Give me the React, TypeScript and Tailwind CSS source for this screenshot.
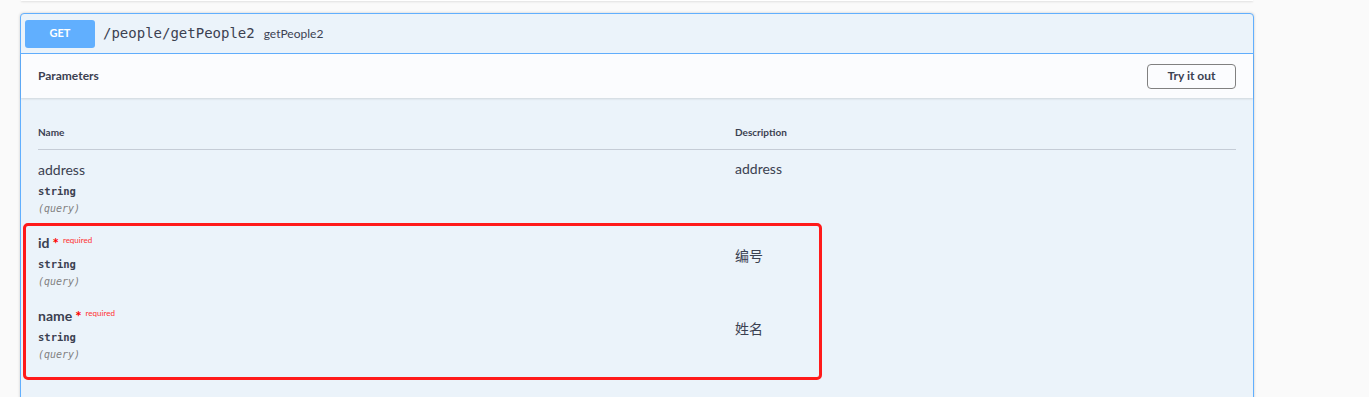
import React from "react";

const sans = { fontFamily: "Lato, 'Noto Sans CJK SC', sans-serif" };

function Param({
  name,
  required,
  desc,
  cjk,
}: {
  name: string;
  required?: boolean;
  desc: string;
  cjk?: boolean;
}) {
  return (
    <div className="grid grid-cols-[697px_1fr]">
      <div className="flex flex-col">
        <div className="flex items-start h-[20px]">
          <span
            className={
              required
                ? "text-[14px] font-bold text-[#3b4151] leading-[20px]"
                : "text-[14px] text-[#3b4151] leading-[20px]"
            }
          >
            {name}
          </span>
          {required && (
            <>
              <span className="ml-[3px] mt-[2px] text-[15px] text-[#ff0000] leading-[16px] font-bold">*</span>
              <span className="ml-[4px] mt-[1px] text-[8px] text-[#ff3030] leading-[12px]">required</span>
            </>
          )}
        </div>
        <div
          className="mt-[4px] text-[10.5px] font-semibold text-[#3b4151] leading-[14px]"
          style={{ fontFamily: "'DejaVu Sans Mono', monospace" }}
        >
          string
        </div>
        <div
          className="mt-[4px] text-[10px] italic text-[#808080] leading-[14px]"
          style={{ fontFamily: "'DejaVu Sans Mono', monospace" }}
        >
          (query)
        </div>
      </div>
      <div className={cjk ? "pt-[13px] text-[14px] text-[#3b4151] leading-[20px]" : "text-[14px] text-[#3b4151] leading-[18px]"}>
        {desc}
      </div>
    </div>
  );
}

export default function App() {
  return (
    <div className="w-[1369px] h-[397px] bg-[#fafafa] overflow-hidden relative" style={sans}>
      <div className="mx-[21px] w-[1232px] h-[1px] bg-white shadow-[0_1px_2px_rgba(0,0,0,0.15)]" />
      <div className="mt-[12px] ml-[20px] w-[1234px] h-[400px] border border-[#61affe] rounded-[4px] bg-[#ebf3fa] shadow-[0_0_3px_rgba(0,0,0,0.19)] relative">
        {/* summary */}
        <div className="h-[40px] flex items-center pl-[4px] border-b border-[#61affe]">
          <div className="w-[70px] h-[28px] rounded-[3px] bg-[#61affe] text-white text-[11px] font-bold flex items-center justify-center">
            GET
          </div>
          <span
            className="ml-[8px] text-[14px] text-[#3b4151]"
            style={{ fontFamily: "'DejaVu Sans Mono', monospace" }}
          >
            /people/getPeople2
          </span>
          <span className="ml-[9px] text-[12px] text-[#3b4151]">getPeople2</span>
        </div>
        {/* section header */}
        <div className="h-[44px] bg-[#fbfcfe] flex items-center justify-between pl-[17px] pr-[17px] shadow-[0_1px_2px_rgba(0,0,0,0.12)]">
          <span className="text-[12px] font-bold text-[#3b4151]">Parameters</span>
          <button className="w-[89px] h-[25px] border border-[#808080] rounded-[4px] text-[12px] font-bold text-[#3b4151] bg-transparent">
            Try it out
          </button>
        </div>
        {/* table */}
        <div className="px-[17px] pt-[27px]">
          <div className="grid grid-cols-[697px_1fr] pb-[9px] border-b border-[#c5ccd6]">
            <span className="text-[10px] font-bold text-[#3b4151]">Name</span>
            <span className="text-[10px] font-bold text-[#3b4151]">Description</span>
          </div>
          <div className="pt-[10px] flex flex-col gap-[17px]">
            <Param name="address" desc="address" />
            <Param name="id" required desc="编号" cjk />
            <Param name="name" required desc="姓名" cjk />
          </div>
        </div>
        {/* annotation */}
        <div className="absolute left-[2px] top-[209px] w-[799px] h-[157px] border-[3px] border-[#ff1a1a] rounded-[5px]" />
      </div>
    </div>
  );
}
